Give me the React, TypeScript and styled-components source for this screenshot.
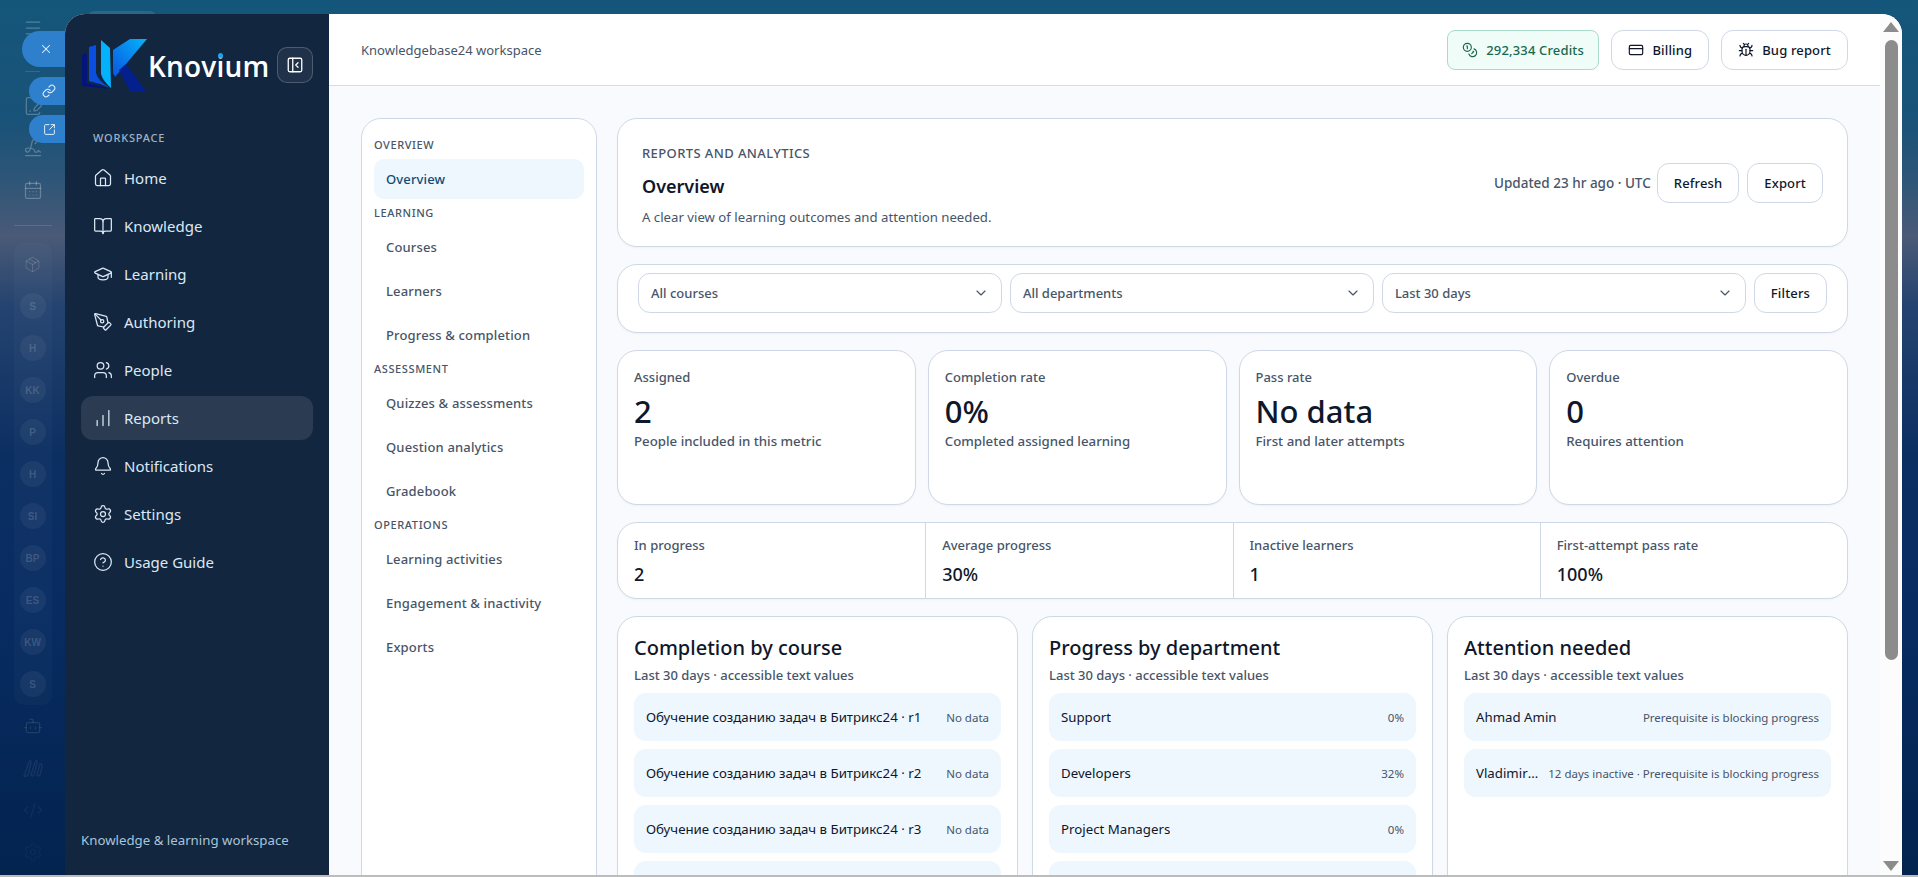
import React from 'react';
import styled, { createGlobalStyle } from 'styled-components';
import {
  Bell,
  Bot,
  BookOpen,
  Bug,
  CalendarDays,
  ChartNoAxesColumnIncreasing,
  ChevronDown,
  CircleHelp,
  CodeXml,
  Coins,
  CreditCard,
  FilePenLine,
  GraduationCap,
  House,
  Link,
  Menu,
  Package,
  PanelLeftClose,
  PenTool,
  Settings,
  Signature,
  SquareArrowOutUpRight,
  Users,
  X,
} from 'lucide-react';

const GlobalStyle = createGlobalStyle`
  html, body {
    margin: 0;
    padding: 0;
    height: 100%;
    overflow: hidden;
  }
  body {
    font-family: 'Noto Sans', 'Open Sans', sans-serif;
    color: #0f172a;
  }
  * {
    box-sizing: border-box;
  }
`;

const Desktop = styled.div`
  position: relative;
  display: flex;
  height: 877px;
  overflow: hidden;
  border-bottom: 2px solid #bcbcbc;
  background: linear-gradient(
    180deg,
    #14567b 0%,
    #1a5278 14%,
    #2c5577 20%,
    #4a5a77 27%,
    #24436f 35%,
    #0c2f62 52%,
    #082c62 70%,
    #03234f 100%
  );
`;

const Rail = styled.aside`
  flex: 0 0 65px;
  display: flex;
  flex-direction: column;
  align-items: center;
  padding-top: 7px;
`;

const RailIcon = styled.div<{ $dim?: number }>`
  flex: 0 0 42px;
  width: 42px;
  display: flex;
  align-items: center;
  justify-content: center;
  color: rgba(255, 255, 255, ${(p) => p.$dim ?? 0.26});
`;

const RailLine = styled.div<{ $w: number; $top: number; $bottom: number }>`
  width: ${(p) => p.$w}px;
  height: 1px;
  background: rgba(255, 255, 255, 0.12);
  margin: ${(p) => p.$top}px 0 ${(p) => p.$bottom}px;
`;

const RailGroup = styled.div`
  width: 38px;
  display: flex;
  flex-direction: column;
  align-items: center;
  background: rgba(255, 255, 255, 0.025);
  border-radius: 10px;
`;

const RailAvatar = styled.div`
  flex: 0 0 42px;
  display: flex;
  align-items: center;
  justify-content: center;

  span {
    width: 26px;
    height: 26px;
    border-radius: 50%;
    display: flex;
    align-items: center;
    justify-content: center;
    background: rgba(255, 255, 255, 0.05);
    color: rgba(255, 255, 255, 0.16);
    font-family: 'Liberation Sans', sans-serif;
    font-size: 10px;
    font-weight: 700;
  }
`;

const GhostTab = styled.div`
  position: absolute;
  left: 88px;
  top: 11px;
  width: 68px;
  height: 12px;
  border-radius: 8px;
  background: rgba(255, 255, 255, 0.1);
`;

const Pill = styled.button<{ $top: number; $left: number; $height: number }>`
  position: absolute;
  top: ${(p) => p.$top}px;
  left: ${(p) => p.$left}px;
  width: ${(p) => 65 - p.$left}px;
  height: ${(p) => p.$height}px;
  display: flex;
  align-items: center;
  justify-content: center;
  padding: 0 0 0 4px;
  border: none;
  border-radius: ${(p) => p.$height / 2}px 0 0 ${(p) => p.$height / 2}px;
  background: #2f80cc;
  color: #eaf3fb;
`;

const Window = styled.div`
  position: relative;
  flex: 1;
  display: flex;
  margin: 14px 16px 0 0;
  border-radius: 20px 20px 0 0;
  overflow: hidden;
  background: #f8fafd;
`;

const Sidebar = styled.nav`
  flex: 0 0 264px;
  min-width: 0;
  display: flex;
  flex-direction: column;
  padding: 25px 16px 0;
  background: #12263f;
  color: #dce8f5;
`;

const BrandRow = styled.div`
  display: flex;
  align-items: flex-start;
  margin: 0 0 39px 1px;
`;

const BrandName = styled.div`
  position: relative;
  margin-top: 10px;
  width: 129px;
  color: #fff;
  font-family: 'Open Sans', sans-serif;
  font-size: 28px;
  line-height: 34px;
  font-weight: 600;
  letter-spacing: 0.2px;
`;

const BrandDot = styled.i`
  position: absolute;
  left: 70px;
  top: 4px;
  width: 5px;
  height: 5px;
  border-radius: 50%;
  background: #12a6ec;
`;

const CollapseButton = styled.button`
  flex: 0 0 36px;
  height: 36px;
  margin-top: 8px;
  display: flex;
  align-items: center;
  justify-content: center;
  padding: 0;
  border: 1px solid rgba(255, 255, 255, 0.2);
  border-radius: 10px;
  background: rgba(255, 255, 255, 0.06);
  color: #fff;
`;

const SidebarLabel = styled.div`
  padding-left: 12px;
  margin-bottom: 10px;
  font-size: 11px;
  line-height: 16px;
  letter-spacing: 0.8px;
  font-weight: 500;
  color: #9fb3c8;
`;

const SidebarList = styled.div`
  display: flex;
  flex-direction: column;
  gap: 4px;
`;

const SidebarItem = styled.a<{ $active?: boolean }>`
  height: 44px;
  display: flex;
  align-items: center;
  gap: 11px;
  padding: 0 12px;
  border-radius: 12px;
  font-size: 15px;
  color: #dce8f5;
  background: ${(p) => (p.$active ? '#2a3b52' : 'transparent')};
`;

const SidebarFooter = styled.div`
  margin-top: auto;
  margin-bottom: 26px;
  font-size: 13.25px;
  line-height: 18px;
  color: #a8c4da;
`;

const Main = styled.div`
  flex: 1;
  min-width: 0;
  display: flex;
  flex-direction: column;
`;

const TopBar = styled.header`
  flex: 0 0 72px;
  display: flex;
  align-items: center;
  justify-content: space-between;
  padding: 0 32px;
  background: #fff;
  border-bottom: 1px solid #d3dcea;
`;

const Workspace = styled.div`
  font-size: 13px;
  color: #475569;
`;

const TopActions = styled.div`
  display: flex;
  gap: 12px;
`;

const Button = styled.button<{ $credits?: boolean }>`
  height: 40px;
  display: inline-flex;
  align-items: center;
  gap: 8px;
  padding: 0 ${(p) => (p.$credits ? 14.5 : 16)}px;
  border: 1px solid ${(p) => (p.$credits ? '#a7dcc6' : '#cfd8e6')};
  border-radius: ${(p) => (p.$credits ? 8 : 12)}px;
  background: ${(p) => (p.$credits ? '#effcf7' : '#fff')};
  color: ${(p) => (p.$credits ? '#166a50' : '#0f172a')};
  font-family: inherit;
  font-size: 13px;
  font-weight: 500;
  letter-spacing: 0.15px;
  white-space: nowrap;
`;

const Content = styled.div`
  flex: 1;
  min-height: 0;
  overflow: hidden;
  display: grid;
  grid-template-columns: 236px 1231px;
  column-gap: 20px;
  align-items: start;
  padding: 32px 32px 0;
`;

const SideNav = styled.div`
  height: 900px;
  display: flex;
  flex-direction: column;
  gap: 6px;
  padding: 18px 12px;
  background: #fff;
  border: 1px solid #cfd8e6;
  border-radius: 20px;
`;

const SideSection = styled.div`
  display: flex;
  flex-direction: column;
  gap: 4px;
`;

const SideLabel = styled.div`
  margin-bottom: 2px;
  font-size: 11px;
  line-height: 16px;
  letter-spacing: 0.6px;
  font-weight: 500;
  color: #475569;
`;

const SideItem = styled.a<{ $active?: boolean }>`
  height: 40px;
  display: flex;
  align-items: center;
  padding: 0 12px;
  border-radius: 10px;
  font-size: 13px;
  font-weight: 500;
  letter-spacing: 0.15px;
  color: ${(p) => (p.$active ? '#0f4c75' : '#475569')};
  background: ${(p) => (p.$active ? '#eef6fe' : 'transparent')};
`;

const Column = styled.div`
  min-width: 0;
  display: flex;
  flex-direction: column;
  gap: 17px;
`;

const Card = styled.section`
  background: #fff;
  border: 1px solid #cfd8e6;
  border-radius: 20px;
  box-shadow: 0 1px 2px rgba(15, 23, 42, 0.04);
`;

const HeaderCard = styled(Card)`
  height: 129px;
  display: flex;
  align-items: center;
  justify-content: space-between;
  padding: 0 24px;
`;

const HeaderText = styled.div`
  margin-top: 5px;
`;

const Eyebrow = styled.div`
  font-size: 13px;
  line-height: 18px;
  font-weight: 500;
  letter-spacing: 0.4px;
  color: #475569;
`;

const PageTitle = styled.h1`
  margin: 11px 0 9px;
  font-size: 18px;
  line-height: 26px;
  font-weight: 600;
`;

const PageText = styled.p`
  margin: 0;
  font-size: 13.2px;
  line-height: 18px;
  color: #475569;
`;

const HeaderActions = styled.div`
  display: flex;
  align-items: center;
  gap: 8px;
`;

const Updated = styled.span`
  margin-right: -2px;
  font-size: 13.5px;
  font-weight: 500;
  color: #475569;
`;

const FilterCard = styled(Card)`
  height: 69px;
  display: flex;
  gap: 8px;
  padding: 8px 20px;
`;

const Select = styled.div`
  flex: 1;
  height: 40px;
  display: flex;
  align-items: center;
  justify-content: space-between;
  padding: 0 12px;
  border: 1px solid #cfd8e6;
  border-radius: 12px;
  font-size: 13px;
  font-weight: 500;
  color: #475569;
`;

const MetricGrid = styled.div`
  display: grid;
  grid-template-columns: repeat(4, 1fr);
  gap: 12px;
`;

const MetricCard = styled(Card)`
  height: 155px;
  padding: 17px 16px;
`;

const MetricLabel = styled.div`
  font-size: 13px;
  line-height: 18px;
  font-weight: 500;
  color: #475569;
`;

const MetricValue = styled.div`
  margin-top: 6px;
  font-size: 31px;
  line-height: 38px;
  font-weight: 500;
`;

const MetricNote = styled.div`
  margin-top: 2px;
  font-size: 13.25px;
  line-height: 18px;
  font-weight: 500;
  color: #475569;
`;

const Strip = styled(Card)`
  height: 77px;
  display: grid;
  grid-template-columns: repeat(4, 1fr);
  overflow: hidden;
`;

const StripCell = styled.div`
  padding: 13px 16px;
  & + & {
    border-left: 1px solid #cfd8e6;
  }
`;

const StripValue = styled.div`
  margin-top: 8px;
  font-size: 18px;
  line-height: 24px;
  font-weight: 500;
`;

const ChartGrid = styled.div`
  display: grid;
  grid-template-columns: repeat(3, minmax(0, 1fr));
  gap: 14px;
`;

const ChartCard = styled(Card)`
  height: 400px;
  padding: 17px 16px 16px;
`;

const ChartTitle = styled.h2`
  margin: 0;
  font-size: 20px;
  line-height: 28px;
  font-weight: 500;
`;

const ChartSub = styled.div`
  margin: 4px 0 9px;
  font-size: 13px;
  line-height: 18px;
  font-weight: 500;
  color: #475569;
`;

const RowList = styled.div`
  display: flex;
  flex-direction: column;
  gap: 8px;
`;

const Row = styled.div`
  height: 48px;
  display: flex;
  align-items: center;
  justify-content: space-between;
  gap: 8px;
  padding: 0 12px;
  border-radius: 12px;
  background: #eef6fe;
`;

const RowName = styled.span`
  min-width: 0;
  overflow: hidden;
  white-space: nowrap;
  text-overflow: ellipsis;
  font-size: 13.25px;
`;

const RowValue = styled.span`
  flex: none;
  white-space: nowrap;
  font-size: 11.5px;
  color: #475569;
`;

const ScrollBar = styled.div`
  flex: 0 0 22px;
  display: flex;
  flex-direction: column;
  align-items: center;
  background: #fcfcfd;
`;

const ScrollThumb = styled.div`
  width: 13px;
  height: 620px;
  margin-top: 8px;
  border-radius: 7px;
  background: #8c8c8c;
`;

const ScrollArrow = styled.svg`
  flex: none;
  width: 16px;
  height: 10px;
  fill: #8c8c8c;
`;

const railIcons = [FilePenLine, Signature, CalendarDays];
const railPeople = ['S', 'H', 'KK', 'P', 'H', 'SI', 'BP', 'ES', 'KW', 'S'];

const sidebarItems = [
  { label: 'Home', icon: House },
  { label: 'Knowledge', icon: BookOpen },
  { label: 'Learning', icon: GraduationCap },
  { label: 'Authoring', icon: PenTool },
  { label: 'People', icon: Users },
  { label: 'Reports', icon: ChartNoAxesColumnIncreasing, active: true },
  { label: 'Notifications', icon: Bell },
  { label: 'Settings', icon: Settings },
  { label: 'Usage Guide', icon: CircleHelp },
];

const sections = [
  { label: 'OVERVIEW', items: ['Overview'] },
  { label: 'LEARNING', items: ['Courses', 'Learners', 'Progress & completion'] },
  { label: 'ASSESSMENT', items: ['Quizzes & assessments', 'Question analytics', 'Gradebook'] },
  { label: 'OPERATIONS', items: ['Learning activities', 'Engagement & inactivity', 'Exports'] },
];

const metrics = [
  { label: 'Assigned', value: '2', note: 'People included in this metric' },
  { label: 'Completion rate', value: '0%', note: 'Completed assigned learning' },
  { label: 'Pass rate', value: 'No data', note: 'First and later attempts' },
  { label: 'Overdue', value: '0', note: 'Requires attention' },
];

const strip = [
  { label: 'In progress', value: '2' },
  { label: 'Average progress', value: '30%' },
  { label: 'Inactive learners', value: '1' },
  { label: 'First-attempt pass rate', value: '100%' },
];

// the fourth row of the first two charts runs off the bottom of the page
const charts = [
  {
    title: 'Completion by course',
    rows: [
      ['Обучение созданию задач в Битрикс24 · r1', 'No data'],
      ['Обучение созданию задач в Битрикс24 · r2', 'No data'],
      ['Обучение созданию задач в Битрикс24 · r3', 'No data'],
      ['', ''],
    ],
  },
  {
    title: 'Progress by department',
    rows: [
      ['Support', '0%'],
      ['Developers', '32%'],
      ['Project Managers', '0%'],
      ['', ''],
    ],
  },
  {
    title: 'Attention needed',
    rows: [
      ['Ahmad Amin', 'Prerequisite is blocking progress'],
      ['Vladimir Sokolov', '12 days inactive · Prerequisite is blocking progress'],
    ],
  },
];

const Logo: React.FC = () => (
  <svg width="66" height="52" viewBox="0 0 66 52" style={{ flex: 'none' }}>
    <defs>
      <linearGradient id="kArm" x1="1" y1="0" x2="0" y2="1">
        <stop offset="0" stopColor="#05b4fb" />
        <stop offset="1" stopColor="#0a55e0" />
      </linearGradient>
    </defs>
    <path d="M0 16 L5 14 L5 44 Q16 46 28 50 L0 47 Z" fill="#03157a" />
    <path d="M7 8 L14 6 L14 34 Q16 42 28 49 Q17 44 7 42 Z" fill="#0b4fe0" />
    <path d="M19 1 L28 9 L29 49 Q21 42 19 35 Z" fill="#04b2fb" />
    <path d="M31 11 L48 0 L65 0 L33 38 L31 34 Z" fill="url(#kArm)" />
    <path d="M37 31 L44 25 L64 52 L48 52 Z" fill="#04208c" />
  </svg>
);

const RailStrokes: React.FC = () => (
  <svg width="20" height="20" viewBox="0 0 20 20" fill="none" stroke="currentColor" strokeWidth="1.4">
    <path d="M1 18 L6 4 Q8 1 8 5 L5 17 Q3 19 1 18 Z" />
    <path d="M8 17 L12 4 Q14 1 14 5 L11 17 Q9 19 8 17 Z" />
    <path d="M14 17 L17 6 Q19 5 19 9 L17 17 Q15 19 14 17 Z" />
  </svg>
);

const App: React.FC = () => {
  return (
    <>
      <GlobalStyle />
      <Desktop>
        <Rail>
          <RailIcon>
            <Menu size={20} strokeWidth={1.5} />
          </RailIcon>
          <RailLine $w={15} $top={22} $bottom={13} />
          {railIcons.map((Icon, i) => (
            <RailIcon key={i}>
              <Icon size={20} strokeWidth={1.5} />
            </RailIcon>
          ))}
          <RailLine $w={38} $top={14} $bottom={17} />
          <RailGroup>
            <RailIcon $dim={0.14}>
              <Package size={17} strokeWidth={1.5} />
            </RailIcon>
            {railPeople.map((name, i) => (
              <RailAvatar key={i}>
                <span>{name}</span>
              </RailAvatar>
            ))}
          </RailGroup>
          <RailIcon $dim={0.1}>
            <Bot size={20} strokeWidth={1.5} />
          </RailIcon>
          <RailIcon $dim={0.07}>
            <RailStrokes />
          </RailIcon>
          <RailIcon $dim={0.05}>
            <CodeXml size={20} strokeWidth={1.5} />
          </RailIcon>
          <RailIcon $dim={0.04}>
            <Settings size={20} strokeWidth={1.5} />
          </RailIcon>
        </Rail>
        <GhostTab />
        <Pill $top={31} $left={22} $height={36}>
          <X size={14} strokeWidth={1.75} />
        </Pill>
        <Pill $top={77} $left={29} $height={28}>
          <Link size={14} strokeWidth={1.75} />
        </Pill>
        <Pill $top={115} $left={29} $height={28}>
          <SquareArrowOutUpRight size={13} strokeWidth={1.75} />
        </Pill>

        <Window>
          <Sidebar>
            <BrandRow>
              <Logo />
              <BrandName>
                Knovium
                <BrandDot />
              </BrandName>
              <CollapseButton>
                <PanelLeftClose size={18} strokeWidth={1.75} />
              </CollapseButton>
            </BrandRow>
            <SidebarLabel>WORKSPACE</SidebarLabel>
            <SidebarList>
              {sidebarItems.map(({ label, icon: Icon, active }) => (
                <SidebarItem key={label} $active={active}>
                  <Icon size={20} strokeWidth={1.5} />
                  {label}
                </SidebarItem>
              ))}
            </SidebarList>
            <SidebarFooter>Knowledge &amp; learning workspace</SidebarFooter>
          </Sidebar>

          <Main>
            <TopBar>
              <Workspace>Knowledgebase24 workspace</Workspace>
              <TopActions>
                <Button $credits>
                  <Coins size={16} strokeWidth={1.75} />
                  292,334 Credits
                </Button>
                <Button>
                  <CreditCard size={16} strokeWidth={1.75} />
                  Billing
                </Button>
                <Button>
                  <Bug size={16} strokeWidth={1.75} />
                  Bug report
                </Button>
              </TopActions>
            </TopBar>

            <Content>
              <SideNav>
                {sections.map((section) => (
                  <SideSection key={section.label}>
                    <SideLabel>{section.label}</SideLabel>
                    {section.items.map((item) => (
                      <SideItem key={item} $active={item === 'Overview'}>
                        {item}
                      </SideItem>
                    ))}
                  </SideSection>
                ))}
              </SideNav>

              <Column>
                <HeaderCard>
                  <HeaderText>
                    <Eyebrow>REPORTS AND ANALYTICS</Eyebrow>
                    <PageTitle>Overview</PageTitle>
                    <PageText>A clear view of learning outcomes and attention needed.</PageText>
                  </HeaderText>
                  <HeaderActions>
                    <Updated>Updated 23 hr ago · UTC</Updated>
                    <Button>Refresh</Button>
                    <Button>Export</Button>
                  </HeaderActions>
                </HeaderCard>

                <FilterCard>
                  {['All courses', 'All departments', 'Last 30 days'].map((value) => (
                    <Select key={value}>
                      {value}
                      <ChevronDown size={16} strokeWidth={1.75} />
                    </Select>
                  ))}
                  <Button>Filters</Button>
                </FilterCard>

                <MetricGrid>
                  {metrics.map((metric) => (
                    <MetricCard key={metric.label}>
                      <MetricLabel>{metric.label}</MetricLabel>
                      <MetricValue>{metric.value}</MetricValue>
                      <MetricNote>{metric.note}</MetricNote>
                    </MetricCard>
                  ))}
                </MetricGrid>

                <Strip>
                  {strip.map((cell) => (
                    <StripCell key={cell.label}>
                      <MetricLabel>{cell.label}</MetricLabel>
                      <StripValue>{cell.value}</StripValue>
                    </StripCell>
                  ))}
                </Strip>

                <ChartGrid>
                  {charts.map((chart) => (
                    <ChartCard key={chart.title}>
                      <ChartTitle>{chart.title}</ChartTitle>
                      <ChartSub>Last 30 days · accessible text values</ChartSub>
                      <RowList>
                        {chart.rows.map(([name, value], i) => (
                          <Row key={i}>
                            <RowName>{name}</RowName>
                            <RowValue>{value}</RowValue>
                          </Row>
                        ))}
                      </RowList>
                    </ChartCard>
                  ))}
                </ChartGrid>
              </Column>
            </Content>
          </Main>

          <ScrollBar>
            <ScrollArrow viewBox="0 0 16 10" style={{ marginTop: 8 }}>
              <path d="M8 0 L16 10 H0 Z" />
            </ScrollArrow>
            <ScrollThumb />
            <ScrollArrow viewBox="0 0 16 10" style={{ marginTop: 'auto', marginBottom: 4 }}>
              <path d="M0 0 H16 L8 10 Z" />
            </ScrollArrow>
          </ScrollBar>
        </Window>
      </Desktop>
    </>
  );
};

export default App;
